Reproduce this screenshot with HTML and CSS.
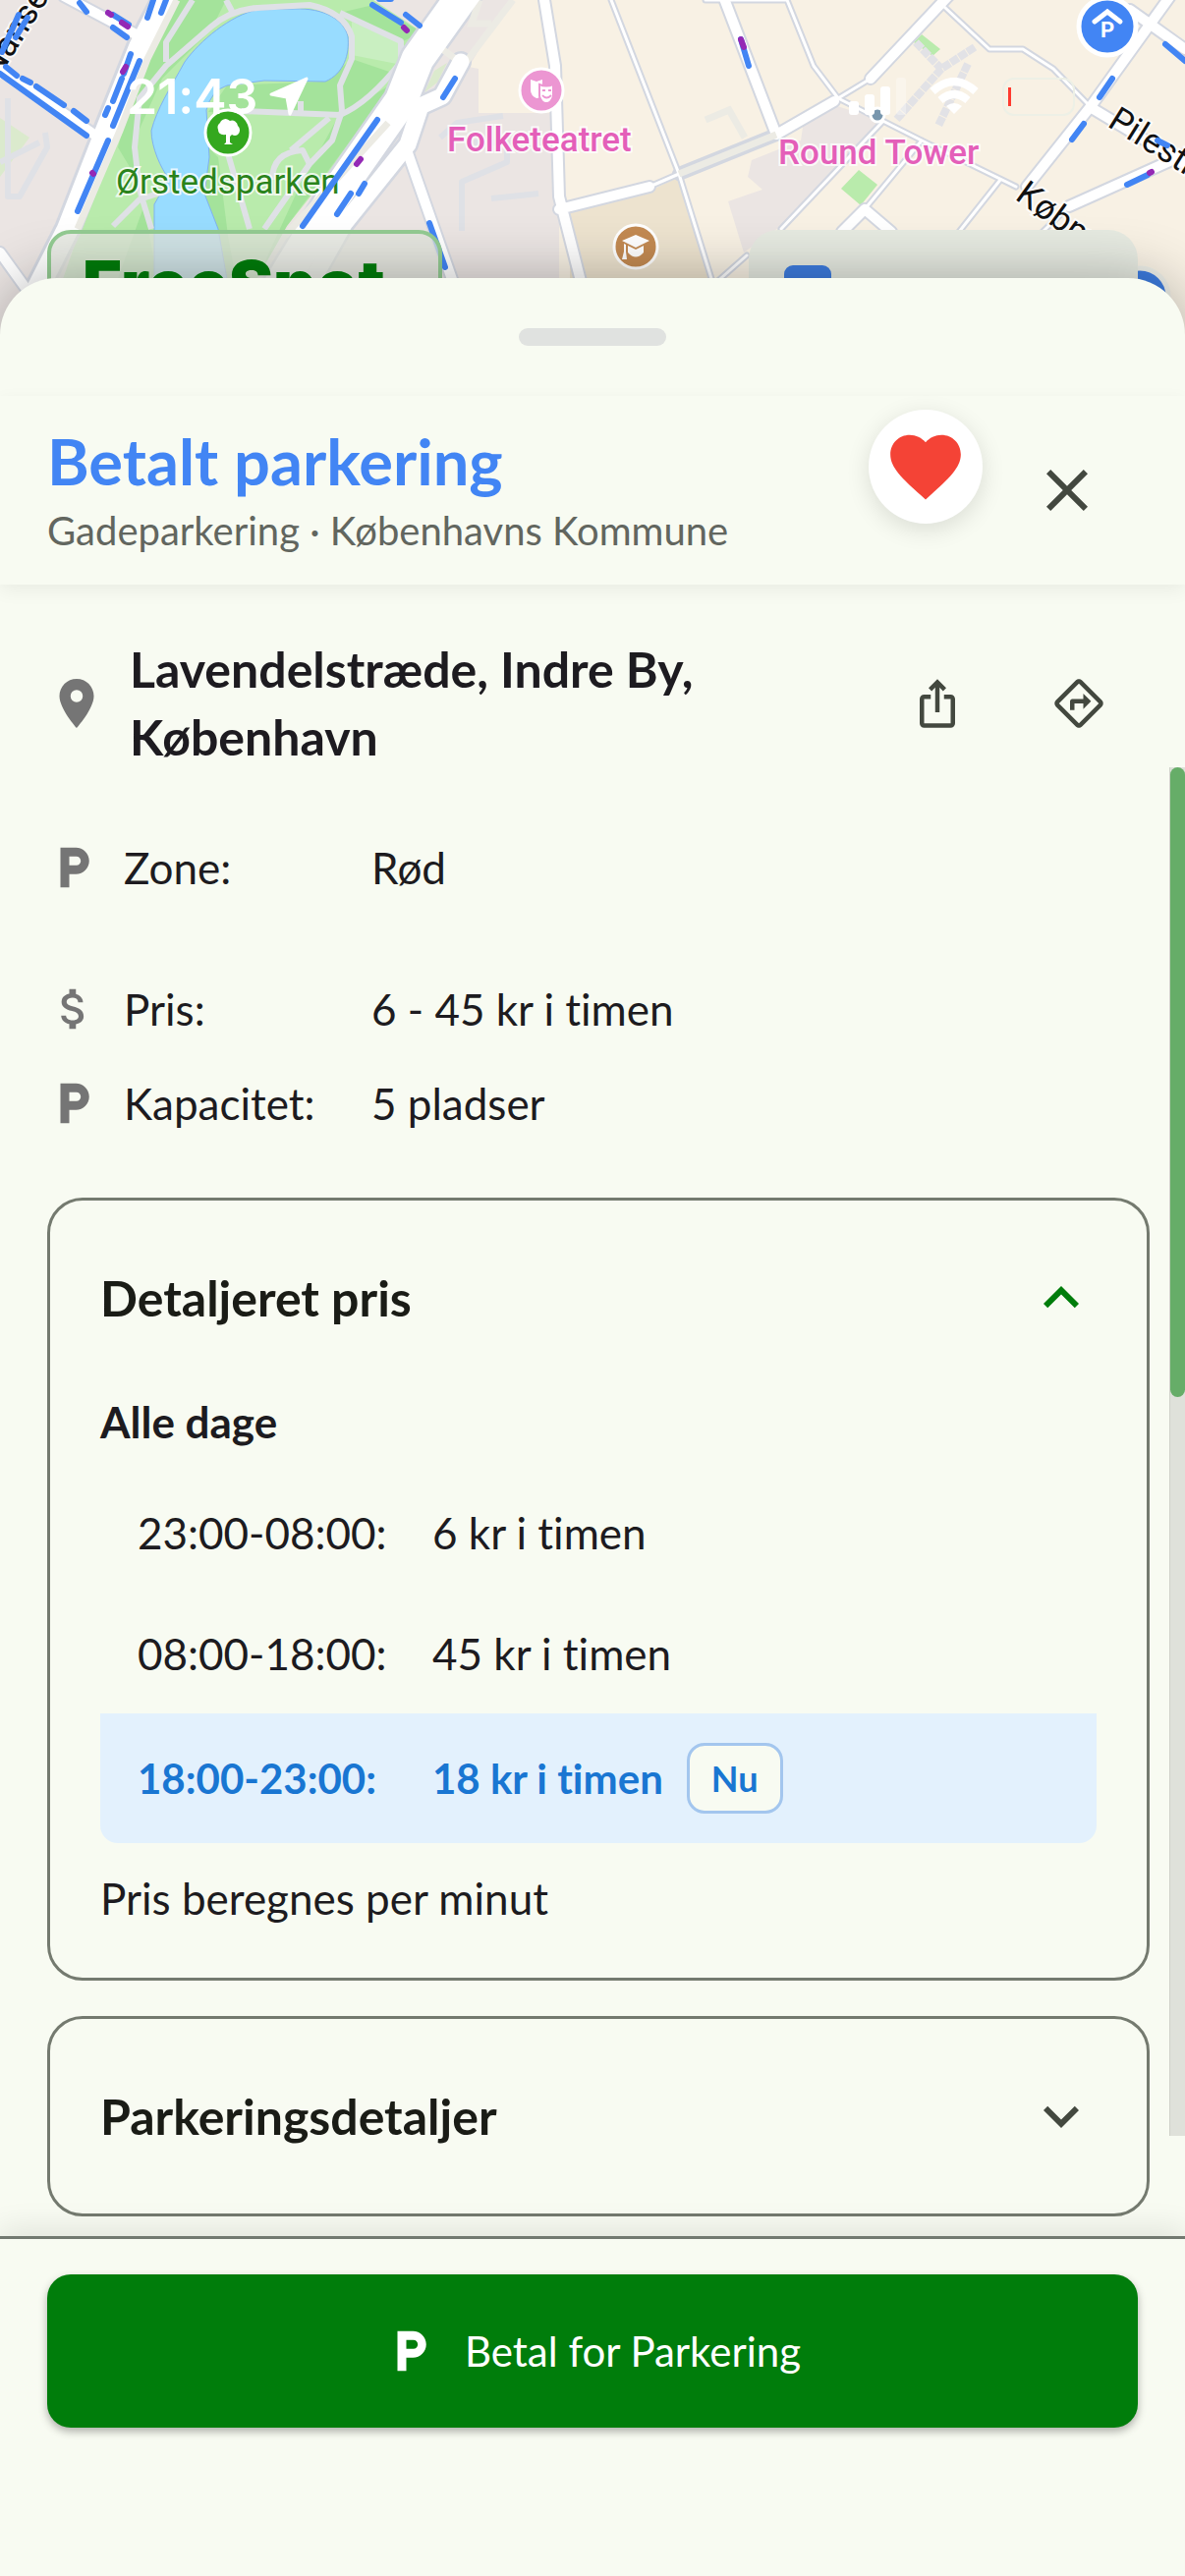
FILE: index.html
```html
<!DOCTYPE html>
<html lang="da">
<head>
    <meta charset="UTF-8">
    <meta name="viewport" content="width=device-width, initial-scale=1.0">
    <title>FreeSpot</title>
    <link rel="stylesheet" href="styles.css">
</head>
<body>
    <div class="map">
        <svg class="map-canvas" viewBox="0 0 1206 344" preserveAspectRatio="xMidYMin slice" aria-hidden="true">
            <rect width="1206" height="344" fill="#ebe5e3"/>
            <path fill="#f8f1e4" d="M519 0L477 68L487 70V115H569V344H1206V0z"/>
            <path fill="#ebe5e3" d="M849 107L818 123L815 143L765 163L761 180L776 193L741 205L757 257L795 230L899 123z"/>
            <path fill="#ede3cf" d="M664 193L691 180L722 283H580V215z"/>
            <path fill="#b9ebac" d="M874 173L893 188L876 209L856 192zM938 35L957 50L949 57L930 43z"/>
            <path fill="#dbeacd" d="M0 120L30 140L0 180zM442 72L455 64L445 84L432 94z"/>

            <!-- park -->
            <path fill="#b9ebac" d="M177 0H380L430 33L408 85L292 230L258 290H62L79 240z"/>
            <path fill="#a4e39b" d="M177 0H230L215 30L165 80L138 140L145 200L160 283H120L150 200L120 150L142 70zM231 87L331 83L358 60L402 75L360 117L212 114zM380 5L430 33L410 42L346 13zM345 117L400 85L292 230L262 283L300 200zM212 150L222 160L232 240L240 283H225L208 197z"/>
            <path fill="#c9efc1" d="M358 22L408 44L404 65L358 56z"/>
            <path fill="#98dcff" stroke="#7fb2f2" stroke-width="1" d="M262 10C235 15 203 42 188 63C172 92 160 110 154 133C154 150 164 172 172 182L157 208V290H232L222 233L208 197L213 160L210 112Q215 92 231 87L269 82L331 83C350 75 356 55 354 37C350 20 330 8 300 9z"/>
            <g class="walk">
                <path d="M154 233L142 193L137 150L142 100L169 67L215 27Q235 10 262 8L315 5Q350 12 358 37V60L346 87L348 113L338 143L315 167L269 233"/>
                <path d="M246 113L346 117Q375 105 408 63V42L346 13"/>
                <path d="M231 153L254 233M277 183Q277 155 308 153L315 167M335 120L296 153M196 0L169 43V63M115 230L142 203L173 193M230 0L238 15M306 113V103"/>
                <path d="M8 100V200L20 200L48 150L46 135M0 165L40 145M480 145H516V165L470 185V235M448 140L465 125L512 118M500 202L548 197"/>
            </g>

            <!-- streets -->
            <g class="street-edge">
                <path stroke-width="28" d="M167 0L142 48L108 133L69 233L30 310"/>
                <path stroke-width="38" d="M482 -20L425 60L408 103L340 200L285 290"/>
                <path stroke-width="22" d="M469 63L450 98L428 108L415 147L350 228L315 290"/>
                <path stroke-width="14" d="M65 -4L142 37M0 70L96 137M413 150L462 290M554 0L565 67L569 200L592 290M569 213L661 190M0 257L31 300"/>
                <path stroke-width="14" d="M736 -4L790 137L849 103M691 177L790 137M965 -4L886 80M1191 -4L1111 107L1045 190M1150 10L1206 50M1111 110L1206 167M1206 157L1088 210M857 236L880 213L907 236"/>
                <path stroke-width="7" d="M622 0L691 177L726 290L760 260M801 0L828 67L853 100L938 143L1034 190M886 80L853 100M661 190L691 177M961 7L1007 50H1041L1072 70L1111 110M899 123L795 233M938 143L880 213M1018 183L976 236M1088 210L1061 236M718 0H800"/>
            </g>
            <path class="lane" d="M522 0L472 66L450 50M488 0L480 24H500"/>
            <g class="street">
                <path stroke-width="22" d="M167 0L142 48L108 133L69 233L30 310"/>
                <path stroke-width="33" d="M482 -20L425 60L408 103L340 200L285 290"/>
                <path stroke-width="17" d="M469 63L450 98L428 108L415 147L350 228L315 290"/>
                <path stroke-width="10" d="M65 -4L142 37M0 70L96 137M413 150L462 290M554 0L565 67L569 200L592 290M569 213L661 190M0 257L31 300"/>
                <path stroke-width="10" d="M736 -4L790 137L849 103M965 -4L886 80M1191 -4L1111 107L1045 190M1150 10L1206 50M1111 110L1206 167M1206 157L1088 210M857 236L880 213L907 236"/>
                <path stroke-width="3" d="M622 0L691 177L726 290L760 260M801 0L828 67L853 100L938 143L1034 190M886 80L853 100M661 190L691 177M961 7L1007 50H1041L1072 70L1111 110M899 123L795 233M938 143L880 213M1018 183L976 236M1088 210L1061 236M718 0H800"/>
            </g>
            <path class="lane" d="M180 0L150 60L122 133L79 233M395 125L290 240M691 177L790 137M718 122L742 112L758 140"/>
            <path class="steps" d="M992 48L958 70L912 122M932 43L958 70M985 65L955 128"/>

            <text class="road-name" transform="translate(-6 72) rotate(-58)" x="-6" y="8">Nanse</text>
            <text class="road-name" transform="translate(1126 128) rotate(32)">Pilestr</text>
            <text class="road-name" transform="translate(1032 202) rotate(36)">Købm</text>
            <text class="park-name" x="118" y="197">Ørstedsparken</text>
            <text class="sight-name" x="455" y="154">Folketeatret</text>
            <text class="sight-name" x="792" y="167">Round Tower</text>

            <!-- parking segments -->
            <path class="paid" d="M81 3L88 12M115 15L131 25M115 28L129 38M156 0L150 18M169 0L164 13M133 55L126 75M124 80L115 103M110 110L107 117M142 62L115 128M110 143L79 215M0 75L88 138M6 68L17 77M23 80L31 84M37 88L65 107M75 113L88 123M379 5L408 23M413 15L427 26M386 -1H398M463 80L451 99M384 122L308 230M371 187L365 197M357 197L343 218M437 227L453 272M754 40L762 67M1186 45L1206 62M1132 80L1119 99M1103 126L1091 142M1178 143L1188 148M1147 188L1168 178M2 53L19 15M16 38L28 18"/>
            <path class="private" d="M110 13L113 15M124 23L130 27M128 68L125 73M94 176L95 177M411 28L414 31M367 162L363 167M754 40L757 48M1170 176L1172 175"/>

            <g stroke="#fff" stroke-width="3">
                <circle cx="232" cy="135" r="23" fill="#34a81f"/>
                <circle cx="551" cy="92" r="22" fill="#ec96d2"/>
                <circle cx="647" cy="251" r="22" fill="#c38a52"/>
                <circle cx="893" cy="117" r="7" fill="#7896ad"/>
            </g>
            <path fill="#fff" d="M234 123a6 6 0 0 1 8 5a6 6 0 0 1 0 9q-3 2-6 0l-2 2v6l3 2h-9l2-2v-8q-8 1-8-5a6 6 0 0 1 2-7a6 6 0 0 1 10-2z"/>
            <path fill="#fff" d="M540 81l6 2 6-2v15q-3 4-6 4q-6-3-6-8z"/>
            <path fill="#fff" stroke="#ec96d2" stroke-width="2" d="M549 86q7 3 14 0v12q-2 7-7 7t-7-7z"/>
            <path fill="none" stroke="#ec96d2" stroke-width="2" d="M552 92h3M558 92h3M552 97q4 5 9 0"/>
            <path fill="#fff" d="M647 239l14 6-14 7-14-7zM639 250l8 4 8-4v7q-8 9-16 0zM635 248v8l-2 8h5l-1-8v-7z"/>
            <circle cx="1127" cy="27" r="29" fill="#4285f4" stroke="#fff" stroke-width="5"/>
            <path fill="none" stroke="#fff" stroke-width="5" stroke-linecap="round" d="M1114 22l13-10 13 10"/>
            <text class="pin-letter" x="1127" y="38">P</text>
            <circle cx="1160" cy="302" r="29" fill="#3d7cdf" stroke="#eceee8" stroke-width="5"/>
        </svg>

        <div class="map-bar">
            <div class="logo">FreeSpot</div>
            <div class="search"><span class="search-chip"></span></div>
        </div>

        <div class="status-bar">
            <div class="status-left">
                <span>21:43</span>
                <svg width="40" height="40" viewBox="0 0 40 40"><path fill="#fff" stroke="#fff" stroke-width="3" stroke-linejoin="round" d="M38 2L21 38L18 21L2 18z"/></svg>
            </div>
            <div class="status-right">
                <svg width="58" height="38" viewBox="0 0 58 38" fill="#fff"><rect y="24" width="10" height="14" rx="3"/><rect x="16" y="17" width="10" height="21" rx="3"/><rect x="32" y="9" width="10" height="29" rx="3"/><rect x="48" width="10" height="38" rx="3" opacity=".3"/></svg>
                <svg width="50" height="38" viewBox="0 0 50 38" fill="none" stroke="#fff" stroke-width="8"><path d="M3 14Q25-6 47 14M11 23Q25 11 39 23"/><path fill="#fff" stroke="none" d="M17 29Q25 23 33 29L25 37z"/></svg>
                <span class="battery"><span class="battery-level"></span></span>
            </div>
        </div>
    </div>

    <main class="sheet">
        <div class="grabber"><span></span></div>

        <header class="sheet-header">
            <div class="heading">
                <h1>Betalt parkering</h1>
                <p>Gadeparkering · Københavns Kommune</p>
            </div>
            <button type="button" class="favourite" aria-label="Favorit">
                <svg viewBox="0 0 24 24"><path d="M12 21.35l-1.45-1.32C5.4 15.36 2 12.28 2 8.5 2 5.42 4.42 3 7.5 3c1.74 0 3.41.81 4.5 2.09C13.09 3.81 14.76 3 16.5 3 19.58 3 22 5.42 22 8.5c0 3.78-3.4 6.86-8.55 11.54L12 21.35z"/></svg>
            </button>
            <button type="button" class="close" aria-label="Luk">
                <svg viewBox="0 0 24 24"><path d="M19 6.41L17.59 5 12 10.59 6.41 5 5 6.41 10.59 12 5 17.59 6.41 19 12 13.41 17.59 19 19 17.59 13.41 12z"/></svg>
            </button>
        </header>

        <div class="content">
            <div class="address">
                <svg class="pin" viewBox="0 0 24 24"><path d="M12 2C8.13 2 5 5.13 5 9c0 5.25 7 13 7 13s7-7.75 7-13c0-3.87-3.13-7-7-7zm0 9.5a2.5 2.5 0 0 1 0-5 2.5 2.5 0 0 1 0 5z"/></svg>
                <p>Lavendelstræde, Indre By, København</p>
                <button type="button" class="icon-button" aria-label="Del">
                    <svg viewBox="0 0 24 24"><path d="M16 5l-1.42 1.42-1.59-1.59V16h-1.98V4.83L9.42 6.42 8 5l4-4 4 4zm4 5v11c0 1.1-.9 2-2 2H6c-1.11 0-2-.9-2-2V10c0-1.11.89-2 2-2h3v2H6v11h12V10h-3V8h3c1.1 0 2 .89 2 2z"/></svg>
                </button>
                <button type="button" class="icon-button" aria-label="Rutevejledning">
                    <svg viewBox="0 0 24 24"><path d="M22.43 10.59l-9.01-9.01c-.75-.75-2.07-.76-2.83 0l-9 9c-.78.78-.78 2.04 0 2.82l9 9c.39.39.9.58 1.41.58.51 0 1.02-.19 1.41-.58l8.99-8.99c.79-.76.8-2.02.03-2.82zm-10.42 10.4l-9-9 9-9 9 9-9 9zM8 11v4h2v-3h4v2.5l3.5-3.5L14 7.5V10H9c-.55 0-1 .45-1 1z"/></svg>
                </button>
            </div>

            <dl class="facts">
                <div class="fact fact-zone">
                    <svg viewBox="0 0 24 24"><path d="M13 3H6v18h4v-6h3c3.31 0 6-2.69 6-6s-2.69-6-6-6zm.2 8H10V7h3.2c1.1 0 2 .9 2 2s-.9 2-2 2z"/></svg>
                    <dt>Zone:</dt>
                    <dd>Rød</dd>
                </div>
                <div class="fact">
                    <svg viewBox="0 0 24 24"><path d="M11.8 10.9c-2.27-.59-3-1.2-3-2.15 0-1.09 1.01-1.85 2.7-1.85 1.78 0 2.44.85 2.5 2.1h2.21c-.07-1.72-1.12-3.3-3.21-3.81V3h-3v2.16c-1.94.42-3.5 1.68-3.5 3.61 0 2.31 1.91 3.46 4.7 4.13 2.5.6 3 1.48 3 2.41 0 .69-.49 1.79-2.7 1.79-2.06 0-2.87-.92-2.98-2.1h-2.2c.12 2.19 1.76 3.42 3.68 3.83V21h3v-2.15c1.95-.37 3.5-1.5 3.5-3.55 0-2.84-2.43-3.81-4.7-4.4z"/></svg>
                    <dt>Pris:</dt>
                    <dd>6 - 45 kr i timen</dd>
                </div>
                <div class="fact">
                    <svg viewBox="0 0 24 24"><path d="M13 3H6v18h4v-6h3c3.31 0 6-2.69 6-6s-2.69-6-6-6zm.2 8H10V7h3.2c1.1 0 2 .9 2 2s-.9 2-2 2z"/></svg>
                    <dt>Kapacitet:</dt>
                    <dd>5 pladser</dd>
                </div>
            </dl>

            <section class="card">
                <h2>
                    <button type="button" class="card-toggle open" aria-expanded="true">
                        Detaljeret pris
                        <svg viewBox="0 0 24 24"><path d="M12 8l-6 6 1.41 1.41L12 10.83l4.59 4.58L18 14z"/></svg>
                    </button>
                </h2>
                <div class="card-body">
                    <h3>Alle dage</h3>
                    <table class="prices">
                        <tr>
                            <th scope="row">23:00-08:00:</th>
                            <td>6 kr i timen</td>
                        </tr>
                        <tr>
                            <th scope="row">08:00-18:00:</th>
                            <td>45 kr i timen</td>
                        </tr>
                        <tr class="current">
                            <th scope="row">18:00-23:00:</th>
                            <td><div class="price-now">18 kr i timen <span class="now">Nu</span></div></td>
                        </tr>
                    </table>
                    <p>Pris beregnes per minut</p>
                </div>
            </section>

            <section class="card">
                <h2>
                    <button type="button" class="card-toggle" aria-expanded="false">
                        Parkeringsdetaljer
                        <svg viewBox="0 0 24 24"><path d="M16.59 8.59L12 13.17 7.41 8.59 6 10l6 6 6-6z"/></svg>
                    </button>
                </h2>
            </section>

            <div class="scrollbar"><div class="thumb"></div></div>
        </div>

        <footer class="pay-bar">
            <button type="button" class="pay">
                <svg viewBox="0 0 24 24"><path d="M13 3H6v18h4v-6h3c3.31 0 6-2.69 6-6s-2.69-6-6-6zm.2 8H10V7h3.2c1.1 0 2 .9 2 2s-.9 2-2 2z"/></svg>
                Betal for Parkering
            </button>
        </footer>
    </main>
</body>
</html>
```

FILE: styles.css
```css
* {
    box-sizing: border-box;
}
body {
    margin: 0;
    font-family: Lato, "Open Sans", sans-serif;
    font-size: 44px;
    font-variant-ligatures: none;
    color: #1d1b20;
    background-color: #f8fbf2;
}
h1, h2, h3, p, dl, dd {
    margin: 0;
}
svg {
    display: block;
    flex: none;
}
button {
    margin: 0;
    padding: 0;
    border: none;
    background: none;
    font-family: inherit;
    font-variant-ligatures: none;
    color: inherit;
    cursor: pointer;
}

/* Map */
.map {
    position: relative;
    height: 344px;
    overflow: hidden;
    background-color: #ebe5e3;
}
.map-canvas {
    width: 100%;
    height: 100%;
}
.walk path {
    fill: none;
    stroke: #dfe1e6;
    stroke-width: 6;
    stroke-linejoin: round;
}
.street path,
.street-edge path {
    fill: none;
    stroke: #ffffff;
    stroke-linecap: round;
    stroke-linejoin: round;
}
.street-edge path {
    stroke: #d3d7e0;
}
.lane {
    fill: none;
    stroke: #ecebe4;
    stroke-width: 7;
}
.steps {
    fill: none;
    stroke: #e2e2e6;
    stroke-width: 8;
    stroke-dasharray: 9 1;
}
.paid,
.private {
    fill: none;
    stroke: #4285f4;
    stroke-width: 6;
    stroke-linecap: round;
}
.private {
    stroke: #9429b5;
}
.road-name,
.park-name,
.sight-name {
    font-family: Roboto, sans-serif;
    font-size: 35px;
    paint-order: stroke;
    stroke: #ffffff;
    stroke-width: 4px;
    stroke-opacity: 0.8;
}
.road-name {
    fill: #111111;
}
.park-name {
    fill: #2a831b;
}
.sight-name {
    fill: #e45fb9;
    font-weight: 500;
}
.pin-letter {
    font-family: Roboto, sans-serif;
    font-size: 22px;
    font-weight: 700;
    fill: #ffffff;
    text-anchor: middle;
}
.map-bar {
    position: absolute;
    top: 234px;
    left: 48px;
    right: 48px;
    display: flex;
    justify-content: space-between;
}
.logo {
    width: 402px;
    height: 110px;
    padding: 10px 32px;
    border: 4px solid #93cb92;
    border-radius: 24px;
    background-color: rgba(226, 228, 220, 0.75);
    font-family: Inter, sans-serif;
    font-size: 68px;
    font-weight: 900;
    color: #007d0b;
}
.search {
    width: 396px;
    height: 110px;
    padding: 36px;
    border-radius: 30px;
    background-color: #e6eae1;
}
.search-chip {
    display: block;
    width: 48px;
    height: 48px;
    border-radius: 9px;
    background-color: #3d7cdf;
}
.status-bar {
    position: absolute;
    top: 66px;
    left: 0;
    right: 0;
    padding: 0 112px 0 129px;
    display: flex;
    justify-content: space-between;
    align-items: center;
    color: #ffffff;
}
.status-left,
.status-right {
    display: flex;
    align-items: center;
    gap: 12px;
}
.status-left {
    font-family: Inter, sans-serif;
    font-size: 50px;
    font-weight: 600;
    line-height: 64px;
}
.status-right {
    gap: 24px;
}
.battery {
    width: 74px;
    height: 39px;
    padding: 8px 4px;
    border: 2px solid #edf0e6;
    border-radius: 12px;
}
.battery-level {
    display: block;
    width: 3px;
    height: 100%;
    background-color: #ff3b30;
}

/* Bottom sheet */
.sheet {
    position: relative;
    margin-top: -61px;
    border-radius: 58px 58px 0 0;
    background-color: #f8fbf2;
    box-shadow: 0 0 60px rgba(0, 0, 0, 0.3);
}
.grabber {
    height: 120px;
    padding-top: 51px;
}
.grabber span {
    display: block;
    width: 150px;
    height: 18px;
    margin: 0 auto;
    border-radius: 9px;
    background-color: #e0e2e0;
}
.sheet-header {
    position: relative;
    height: 192px;
    padding: 14px 84px 20px 48px;
    display: flex;
    background-color: #f8fbf2;
    box-shadow: 0 6px 18px rgba(0, 0, 0, 0.06);
}
.heading {
    flex: 1;
    padding-top: 12px;
}
.heading h1 {
    font-size: 65px;
    font-weight: 700;
    line-height: 80px;
    color: #4285f4;
}
.heading p {
    font-size: 40px;
    line-height: 62px;
    color: #62665f;
}
.favourite {
    width: 116px;
    height: 116px;
    display: flex;
    justify-content: center;
    align-items: center;
    border-radius: 50%;
    background-color: #ffffff;
    box-shadow: 0 6px 24px rgba(0, 0, 0, 0.12);
}
.favourite svg {
    width: 86px;
    height: 86px;
    fill: #f44336;
}
.close {
    margin-left: 50px;
    padding-top: 6px;
}
.close svg {
    width: 72px;
    height: 72px;
    fill: #43483f;
}

.content {
    position: relative;
    padding: 52px 36px 20px 48px;
}
.address {
    display: flex;
    align-items: center;
    margin-bottom: 50px;
}
.address p {
    flex: 1;
    padding: 0 100px 0 24px;
    font-size: 50px;
    font-weight: 700;
    line-height: 69px;
}
.pin {
    width: 60px;
    height: 60px;
    fill: #757575;
}
.icon-button {
    width: 144px;
    height: 96px;
    display: flex;
    justify-content: center;
    align-items: center;
}
.icon-button svg {
    width: 54px;
    height: 54px;
    fill: #43483f;
}

.fact {
    height: 96px;
    display: flex;
    align-items: center;
}
.fact-zone {
    margin-bottom: 48px;
}
.fact svg {
    width: 54px;
    height: 54px;
    margin-right: 24px;
    fill: #757575;
}
.fact dt {
    width: 252px;
}

.card {
    margin-top: 48px;
    padding: 0 51px;
    border: 3px solid #747a6f;
    border-radius: 36px;
}
.card + .card {
    margin-top: 36px;
}
.card-toggle {
    width: 100%;
    height: 198px;
    display: flex;
    justify-content: space-between;
    align-items: center;
    font-size: 50px;
    font-weight: 700;
    color: #1a1c16;
}
.card-toggle svg {
    width: 72px;
    height: 72px;
    fill: #43483f;
}
.card-toggle.open svg {
    fill: #007d0b;
}
.card-body {
    padding-bottom: 51px;
}
.card-body h3 {
    margin-bottom: 24px;
    font-size: 44px;
    font-weight: 700;
    line-height: 54px;
}
.card-body p {
    margin-top: 26px;
    line-height: 60px;
}
.prices {
    width: 100%;
    border-spacing: 0;
}
.prices th,
.prices td {
    height: 123px;
    padding: 0;
    font-weight: 400;
    text-align: left;
}
.prices th {
    width: 338px;
    padding-left: 38px;
}
.prices .current th,
.prices .current td {
    height: 132px;
    font-size: 42px;
    font-weight: 700;
    color: #1976d2;
    background-color: #e3f1fd;
}
.prices .current th {
    border-bottom-left-radius: 18px;
}
.prices .current td {
    border-bottom-right-radius: 18px;
}
.price-now {
    display: flex;
    align-items: center;
    gap: 24px;
}
.now {
    height: 72px;
    padding: 0 22px;
    border: 3px solid #a3c6ee;
    border-radius: 18px;
    background-color: #f8fbf2;
    font-size: 36px;
    line-height: 66px;
}

.scrollbar {
    position: absolute;
    top: 186px;
    right: 0;
    bottom: 102px;
    width: 16px;
    border-left: 1px solid #cfd1ca;
    background-color: #dfe1da;
}
.thumb {
    height: 46%;
    border-radius: 8px;
    background-color: #66ad68;
}

.pay-bar {
    position: relative;
    padding: 36px 48px 150px;
    border-top: 3px solid #727970;
    background-color: #f8fbf2;
    box-shadow: 0 -6px 30px rgba(0, 0, 0, 0.1);
}
.pay {
    width: 100%;
    height: 156px;
    display: flex;
    justify-content: center;
    align-items: center;
    gap: 28px;
    border-radius: 24px;
    background-color: #007d0b;
    box-shadow: 0 4px 8px rgba(0, 0, 0, 0.3);
    font-size: 42px;
    color: #ffffff;
}
.pay svg {
    width: 54px;
    height: 54px;
    fill: #ffffff;
}
```
